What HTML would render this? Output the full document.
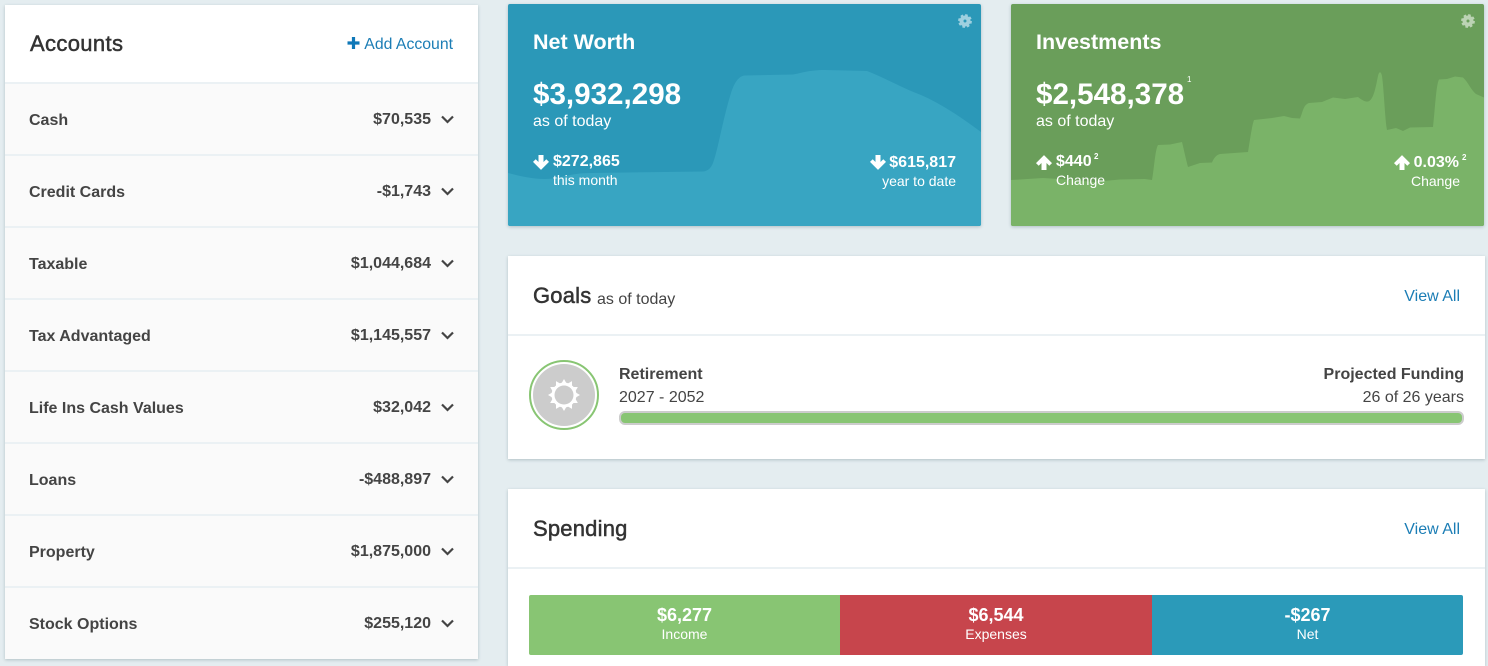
<!DOCTYPE html>
<html lang="en"><head><meta charset="utf-8"><title>Dashboard</title>
<style>
html,body{margin:0;padding:0;width:1488px;height:666px;overflow:hidden}
body{background:#e4edf0;font-family:"Liberation Sans",sans-serif;position:relative;color:#444}
.card{position:absolute;background:#fff;box-shadow:0 1px 3px rgba(60,90,100,.3);overflow:hidden}
.t{position:absolute;white-space:nowrap;line-height:20px;height:20px}
.r{text-align:right}
.b{font-weight:bold}
.h{font-size:22px;color:#333;-webkit-text-stroke:.5px #333;letter-spacing:.2px}
.w{color:#fff}
.rowl{font-size:16px;font-weight:bold;color:#444}
.link{font-size:16px;color:#1b7db5}
.sep{position:absolute;height:2px;background:#ebf1f4}
.row{position:absolute;left:5px;width:473px;background:#fafafa}
svg{position:absolute;overflow:visible}
</style></head><body>

<!-- Accounts -->
<div class="card" style="left:5px;top:5px;width:473px;height:654px"></div>
<div class="row" style="top:84px;height:575px"></div>
<div class="sep" style="left:5px;width:473px;top:82px"></div>
<div class="t h" style="left:30px;top:34px;letter-spacing:.35px">Accounts</div>
<svg style="left:347px;top:37px" width="13" height="13"><path d="M6.500 0v12M.5 6h12" stroke="#0f78b8" stroke-width="3.200" fill="none"/></svg>
<div class="t link" style="right:1035px;top:35px;font-size:15.800px">Add Account</div>

<div class="sep" style="left:5px;width:473px;top:154px"></div>
<div class="sep" style="left:5px;width:473px;top:226px"></div>
<div class="sep" style="left:5px;width:473px;top:298px"></div>
<div class="sep" style="left:5px;width:473px;top:370px"></div>
<div class="sep" style="left:5px;width:473px;top:442px"></div>
<div class="sep" style="left:5px;width:473px;top:514px"></div>
<div class="sep" style="left:5px;width:473px;top:586px"></div>

<div class="t rowl" style="left:29px;top:111px">Cash</div><div class="t rowl r" style="right:1057px;top:110px">$70,535</div>
<div class="t rowl" style="left:29px;top:183px">Credit Cards</div><div class="t rowl r" style="right:1057px;top:182px">-$1,743</div>
<div class="t rowl" style="left:29px;top:255px">Taxable</div><div class="t rowl r" style="right:1057px;top:254px">$1,044,684</div>
<div class="t rowl" style="left:29px;top:327px">Tax Advantaged</div><div class="t rowl r" style="right:1057px;top:326px">$1,145,557</div>
<div class="t rowl" style="left:29px;top:399px">Life Ins Cash Values</div><div class="t rowl r" style="right:1057px;top:398px">$32,042</div>
<div class="t rowl" style="left:29px;top:471px">Loans</div><div class="t rowl r" style="right:1057px;top:470px">-$488,897</div>
<div class="t rowl" style="left:29px;top:543px">Property</div><div class="t rowl r" style="right:1057px;top:542px">$1,875,000</div>
<div class="t rowl" style="left:29px;top:615px">Stock Options</div><div class="t rowl r" style="right:1057px;top:614px">$255,120</div>

<svg style="left:0;top:0" width="1" height="1">
<g fill="none" stroke="#444" stroke-width="2.200">
<path d="M442 116.500l5.500 5.500 5.500-5.500"/><path d="M442 188.500l5.500 5.500 5.500-5.500"/><path d="M442 260.500l5.500 5.500 5.500-5.500"/><path d="M442 332.500l5.500 5.500 5.500-5.500"/><path d="M442 404.500l5.500 5.500 5.500-5.500"/><path d="M442 476.500l5.500 5.500 5.500-5.500"/><path d="M442 548.500l5.500 5.500 5.500-5.500"/><path d="M442 620.500l5.500 5.500 5.500-5.500"/>
</g></svg>

<!-- Net Worth -->
<div class="card" style="left:508px;top:4px;width:473px;height:222px;background:#2b98b8;border-radius:2px"></div>
<svg style="left:0;top:0" width="1" height="1">
<path fill="#38a5c2" d="M508 173C520 176 532 179 545 179C560 179 570 173 590 173L703 171.500C708 171 711 168 713 163C718 150 723 118 731 93C734 84 738 76 745 75.500L793 74.500C800 73.500 808 70 825 70L867 71C885 78 900 87 921 95C942 104 962 118 981 132V224Q981 226 979 226H510Q508 226 508 224Z"/>
<g transform="translate(965 21)" fill="none" stroke="#fff" opacity=".55"><circle r="3.500" stroke-width="4"/><circle r="5.800" stroke-width="2.200" stroke-dasharray="2.550 2"/></g>
<g fill="#fff">
<path d="M538.500 155h5v7l2.800-2.800 2.700 2.700-8 8-8-8 2.700-2.700 2.800 2.800z"/>
<path d="M875.500 155h5v7l2.800-2.800 2.700 2.700-8 8-8-8 2.700-2.700 2.800 2.800z"/>
</g>
</svg>
<div class="t b w" style="left:533px;top:32px;font-size:21.500px">Net Worth</div>
<div class="t b w" style="left:533px;top:85px;font-size:29.600px">$3,932,298</div>
<div class="t w" style="left:533px;top:112px;font-size:16px">as of today</div>
<div class="t b w" style="left:553px;top:152px;font-size:16px">$272,865</div>
<div class="t w" style="left:553px;top:170px;font-size:14px">this month</div>
<div class="t b w r" style="right:532px;top:153px;font-size:16px">$615,817</div>
<div class="t w r" style="right:532px;top:171px;font-size:14px">year to date</div>

<!-- Investments -->
<div class="card" style="left:1011px;top:4px;width:473px;height:222px;background:#6a9e5a;border-radius:2px"></div>
<svg style="left:0;top:0" width="1" height="1">
<path fill="#7ab368" d="M1011 180L1043 178L1075 180L1093 182L1120 179.500L1145 179L1152 180C1154 170 1155 150 1158 145L1170 144.500L1182 142C1184 150 1186 160 1188 167L1200 163L1212 162.500C1214 158 1216 155 1220 154L1248 152C1250 140 1252 125 1254 120L1272 118L1284 116L1292 118L1300 118.500C1303 112 1303 105 1309 103L1322 102L1333 97.500L1345 99L1358 97C1362 100 1365 102 1368 101.500C1374 100 1376 85 1378 76C1379 71 1381 71 1382 76C1384 90 1385 120 1387 130L1396 128L1403 131L1410 127.500L1433 127C1435 110 1436 85 1439 79.500L1447 79L1455 76.500L1463 77.500C1468 82 1471 90 1476 94L1484 97.500V224Q1484 226 1482 226H1013Q1011 226 1011 224Z"/>
<g transform="translate(1468 21)" fill="none" stroke="#fff" opacity=".55"><circle r="3.500" stroke-width="4"/><circle r="5.800" stroke-width="2.200" stroke-dasharray="2.550 2"/></g>
<g fill="#fff">
<path d="M1041.500 170h5v-7l2.800 2.800 2.700-2.700-8-8-8 8 2.700 2.700 2.800-2.800z"/>
<path d="M1399.500 170h5v-7l2.800 2.800 2.700-2.700-8-8-8 8 2.700 2.700 2.800-2.800z"/>
</g>
</svg>
<div class="t b w" style="left:1036px;top:32px;font-size:21.500px">Investments</div>
<div class="t b w" style="left:1036px;top:85px;font-size:29.600px">$2,548,378</div>
<div class="t w" style="left:1187px;top:70px;font-size:8px">1</div>
<div class="t w" style="left:1036px;top:112px;font-size:16px">as of today</div>
<div class="t b w" style="left:1056px;top:152px;font-size:16px">$440</div>
<div class="t w" style="left:1094px;top:147px;font-size:8px;font-weight:bold">2</div>
<div class="t w" style="left:1056px;top:170px;font-size:14px">Change</div>
<div class="t b w r" style="right:29px;top:153px;font-size:16px">0.03%</div>
<div class="t w" style="left:1462px;top:148px;font-size:8px;font-weight:bold">2</div>
<div class="t w r" style="right:28px;top:171px;font-size:14px">Change</div>

<!-- Goals -->
<div class="card" style="left:508px;top:256px;width:977px;height:203px"></div>
<div class="sep" style="left:508px;width:977px;top:334px"></div>
<div class="t h" style="left:533px;top:286px">Goals</div>
<div class="t" style="left:597px;top:290px;font-size:16px">as of today</div>
<div class="t link" style="right:28px;top:287px">View All</div>
<svg style="left:0;top:0" width="1" height="1">
<circle cx="564" cy="395" r="34" fill="#fff" stroke="#88c573" stroke-width="2"/>
<circle cx="564" cy="395" r="31" fill="#ccc"/>
<g transform="translate(564 395)" fill="#fff">
<circle r="12.500"/>
<polygon points="0,-16 13.860,8 -13.860,8"/>
<polygon points="0,-16 13.860,8 -13.860,8" transform="rotate(30)"/>
<polygon points="0,-16 13.860,8 -13.860,8" transform="rotate(60)"/>
<polygon points="0,-16 13.860,8 -13.860,8" transform="rotate(90)"/>
<circle r="9.500" fill="#ccc"/>
</g>
</svg>
<div class="t b" style="left:619px;top:365px;font-size:16px">Retirement</div>
<div class="t" style="left:619px;top:388px;font-size:16px">2027 - 2052</div>
<div class="t b r" style="right:24px;top:365px;font-size:16px">Projected Funding</div>
<div class="t r" style="right:24px;top:388px;font-size:16px">26 of 26 years</div>
<div style="position:absolute;left:619px;top:411px;width:841px;height:10px;border:2px solid #ccc;border-radius:6px;background:#88c573"></div>

<!-- Spending -->
<div class="card" style="left:508px;top:489px;width:977px;height:177px"></div>
<div class="sep" style="left:508px;width:977px;top:567px"></div>
<div class="t h" style="left:533px;top:519px">Spending</div>
<div class="t link" style="right:28px;top:520px">View All</div>
<div style="position:absolute;left:529px;top:595px;width:311px;height:60px;background:#88c573;border-radius:2px 0 0 2px"></div>
<div style="position:absolute;left:840px;top:595px;width:312px;height:60px;background:#c7454c"></div>
<div style="position:absolute;left:1152px;top:595px;width:311px;height:60px;background:#2b9ab9;border-radius:0 2px 2px 0"></div>
<div class="t b w" style="left:529px;width:311px;text-align:center;top:605px;font-size:18px">$6,277</div>
<div class="t w" style="left:529px;width:311px;text-align:center;top:624px;font-size:14px">Income</div>
<div class="t b w" style="left:840px;width:312px;text-align:center;top:605px;font-size:18px">$6,544</div>
<div class="t w" style="left:840px;width:312px;text-align:center;top:624px;font-size:14px">Expenses</div>
<div class="t b w" style="left:1152px;width:311px;text-align:center;top:605px;font-size:18px">-$267</div>
<div class="t w" style="left:1152px;width:311px;text-align:center;top:624px;font-size:14px">Net</div>
</body></html>
